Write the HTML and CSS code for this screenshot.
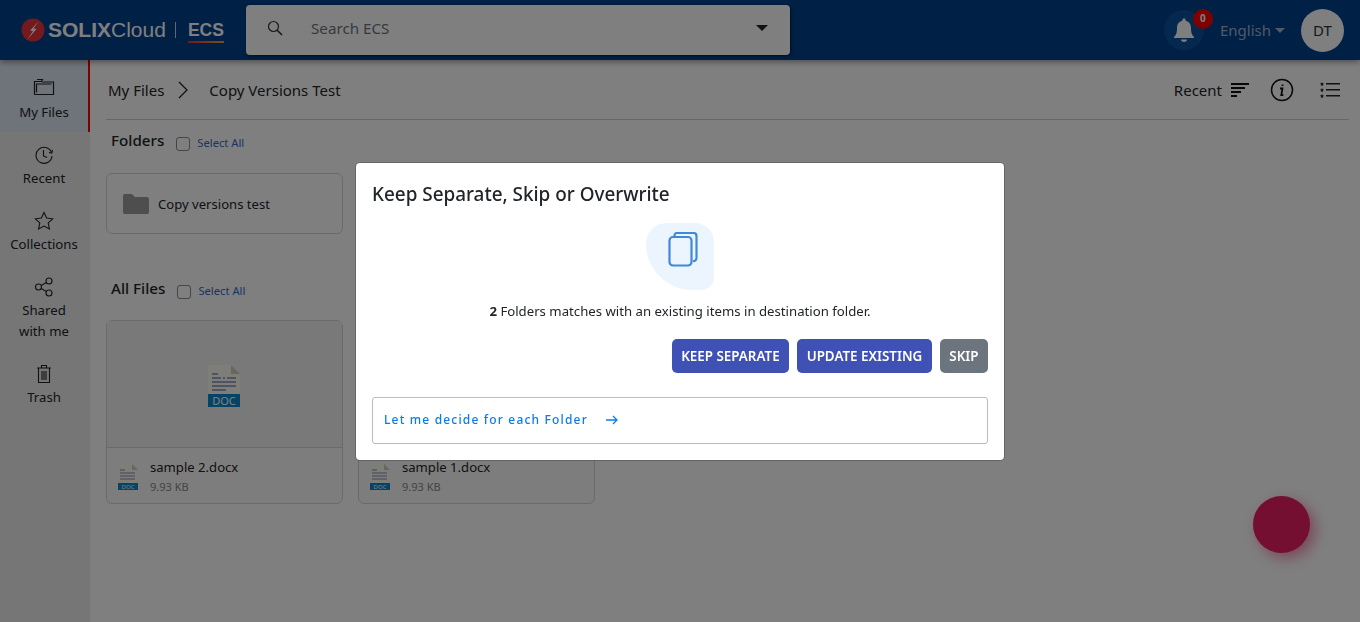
FILE: index.html
```html
<!DOCTYPE html>
<html>
<head>
    <title>SOLIXCloud ECS</title>
    <link rel="stylesheet" href="styles.css">
</head>
<body>
    <header class="topbar">
        <div class="logo">
            <svg class="logo-mark" width="24" height="24" viewBox="0 0 24 24">
                <circle cx="12" cy="12" r="11.5" fill="#e8323a"/>
                <path d="M18 3 L9 12.500 L12 13 L6 22 L15.500 11 L12.500 10.500 Z" fill="#fff"/>
            </svg>
            <span class="logo-solix">SOLIX</span><span class="logo-cloud">Cloud</span>
            <span class="logo-sep"></span>
            <span class="logo-ecs">ECS</span>
        </div>
        <div class="search">
            <svg width="16" height="16" viewBox="0 0 16 16" fill="none" stroke="#333" stroke-width="1.2">
                <circle cx="6.5" cy="6.5" r="5"/>
                <path d="M10.2 10.2 L15 15" stroke-width="1.6"/>
            </svg>
            <span class="search-text">Search ECS</span>
            <span class="search-caret"></span>
        </div>
        <div class="topbar-right">
            <div class="bell">
                <svg width="24" height="26" viewBox="0 0 24 26" fill="#fff">
                    <path d="M12 1.500c-1 0-1.700.7-1.700 1.700v.6C6.800 4.600 5 7.500 5 11c0 5-1 7-3 9v1h20v-1c-2-2-3-4-3-9 0-3.500-1.800-6.400-5.300-7.200v-.6c0-1-.7-1.700-1.700-1.700z"/>
                    <path d="M9 22.500h6c0 1.500-1.300 2.500-3 2.500s-3-1-3-2.500z"/>
                </svg>
                <span class="bell-count">0</span>
            </div>
            <span class="lang">English<span class="lang-caret"></span></span>
            <span class="avatar">DT</span>
        </div>
    </header>

    <div class="main">
        <nav class="sidebar">
            <a class="nav-item active">
                <svg width="22" height="18" viewBox="0 0 22 18" fill="none" stroke="#222" stroke-width="1.2">
                    <path d="M1.500 16.500V3.500h7l1-2H4"/>
                    <path d="M1.500 16.500H20.500V4H9"/>
                    <path d="M3.500 14.500V6H18.500"/>
                </svg>
                <span>My Files</span>
            </a>
            <a class="nav-item">
                <svg width="20" height="20" viewBox="0 0 20 20" fill="none" stroke="#222" stroke-width="1.1">
                    <path d="M17.500 7.500A8 8 0 1 0 18 11"/>
                    <path d="M15 7.500l2.700.5.800-3"/>
                    <path d="M9.500 5v6l3.500 1.500"/>
                </svg>
                <span>Recent</span>
            </a>
            <a class="nav-item">
                <svg width="20" height="20" viewBox="0 0 20 20" fill="none" stroke="#222" stroke-width="1.1">
                    <path d="M10 1.500l2.600 5.600 6 .7-4.400 4.100 1.200 6L10 15l-5.400 2.900 1.200-6L1.400 7.800l6-.7z"/>
                </svg>
                <span>Collections</span>
            </a>
            <a class="nav-item">
                <svg width="20" height="20" viewBox="0 0 20 20" fill="none" stroke="#222" stroke-width="1.1">
                    <circle cx="15" cy="4" r="3"/>
                    <circle cx="4.500" cy="10" r="3"/>
                    <circle cx="15" cy="16" r="3"/>
                    <path d="M12.300 5.500L7.200 8.500M7.200 11.500l5.100 3"/>
                </svg>
                <span>Shared<br>with me</span>
            </a>
            <a class="nav-item">
                <svg width="18" height="20" viewBox="0 0 18 20" fill="none" stroke="#222" stroke-width="1.1">
                    <path d="M2 4h14M6.500 4V1.500h5V4M3.500 4v14.500h11V4"/>
                    <path d="M7 7v9M9 7v9M11 7v9"/>
                </svg>
                <span>Trash</span>
            </a>
        </nav>

        <div class="content">
            <div class="crumbs">
                <span>My Files</span>
                <svg class="chevron" width="12" height="18" viewBox="0 0 12 18" fill="none" stroke="#222" stroke-width="1.300">
                    <path d="M2 1l8 8-8 8"/>
                </svg>
                <span>Copy Versions Test</span>
                <div class="crumb-tools">
                    <span>Recent</span>
                    <svg class="sort-icon" width="18" height="14" viewBox="0 0 18 14" fill="#111">
                        <rect x="0" y="0" width="18" height="2"/>
                        <rect x="0" y="4" width="14" height="2"/>
                        <rect x="0" y="8" width="10" height="2"/>
                        <rect x="0" y="12" width="6" height="2"/>
                    </svg>
                    <svg class="info-icon" width="24" height="24" viewBox="0 0 24 24" fill="none" stroke="#111" stroke-width="1.500">
                        <circle cx="12" cy="12" r="10.500"/>
                        <path d="M10 10.500h2.500l-1.200 6.500h2M12.500 6.500v1.500" stroke-width="1.800"/>
                    </svg>
                    <svg class="list-icon" width="20" height="16" viewBox="0 0 20 16" fill="#222">
                        <rect x="6" y="1" width="14" height="1.500"/>
                        <rect x="6" y="7" width="14" height="1.500"/>
                        <rect x="6" y="13" width="14" height="1.500"/>
                        <path d="M2 0l.6 1.300L4 1.500 3 2.500l.2 1.400L2 3.200.8 3.900 1 2.500 0 1.500l1.400-.2z"/>
                        <path d="M2 6l.6 1.300L4 7.500 3 8.500l.2 1.400L2 9.200l-1.200.7L1 8.500 0 7.500l1.400-.2z"/>
                        <path d="M2 12l.6 1.300 1.400.2-1 1 .2 1.400-1.200-.7-1.200.7.200-1.400-1-1 1.400-.2z"/>
                    </svg>
                </div>
            </div>

            <div class="section-head">
                <h3>Folders</h3>
                <span class="check"></span>
                <a class="select-all">Select All</a>
            </div>
            <div class="folder-card">
                <svg width="26" height="20" viewBox="0 0 26 20" fill="#9c9c9c">
                    <path d="M0 2a2 2 0 0 1 2-2h7l3 3h12a2 2 0 0 1 2 2v13a2 2 0 0 1-2 2H2a2 2 0 0 1-2-2z"/>
                </svg>
                <span>Copy versions test</span>
            </div>

            <div class="section-head files-head">
                <h3>All Files</h3>
                <span class="check"></span>
                <a class="select-all">Select All</a>
            </div>
            <div class="file-grid">
                <div class="file-card">
                    <div class="file-thumb">
                        <svg width="32" height="42" viewBox="0 0 32 42">
                            <path d="M0 0h23l9 9v24H0z" fill="#fdfdf0"/>
                            <path d="M23 0l9 9h-9z" fill="#cfcfbe"/>
                            <path d="M4 9h6M4 13h9M15 13h2M19 13h9M4 17h24M4 21h24M4 25h14" stroke="#7f86b8" stroke-width="1.500"/>
                            <rect y="29" width="32" height="13" fill="#0a88cc"/>
                            <text x="16" y="40" class="doc-label">DOC</text>
                        </svg>
                    </div>
                    <div class="file-info">
                        <svg class="doc-icon" width="20" height="26" viewBox="0 0 20 26">
                            <path d="M0 0h14l6 6v14H0z" fill="#fdfdf0"/>
                            <path d="M14 0l6 6h-6z" fill="#cfcfbe"/>
                            <path d="M2 6h5M2 9h15M2 12h15M2 15h15" stroke="#7f86b8" stroke-width="1.200"/>
                            <rect y="19" width="20" height="7" fill="#0a88cc"/>
                            <text x="10" y="25" class="doc-label small">DOC</text>
                        </svg>
                        <div>
                            <div class="file-name">sample 2.docx</div>
                            <div class="file-size">9.93 KB</div>
                        </div>
                    </div>
                </div>
                <div class="file-card">
                    <div class="file-thumb"></div>
                    <div class="file-info">
                        <svg class="doc-icon" width="20" height="26" viewBox="0 0 20 26">
                            <path d="M0 0h14l6 6v14H0z" fill="#fdfdf0"/>
                            <path d="M14 0l6 6h-6z" fill="#cfcfbe"/>
                            <path d="M2 6h5M2 9h15M2 12h15M2 15h15" stroke="#7f86b8" stroke-width="1.200"/>
                            <rect y="19" width="20" height="7" fill="#0a88cc"/>
                            <text x="10" y="25" class="doc-label small">DOC</text>
                        </svg>
                        <div>
                            <div class="file-name">sample 1.docx</div>
                            <div class="file-size">9.93 KB</div>
                        </div>
                    </div>
                </div>
            </div>
        </div>
    </div>

    <div class="fab"></div>

    <div class="backdrop">
        <div class="modal">
            <h2>Keep Separate, Skip or Overwrite</h2>
            <div class="modal-icon">
                <svg width="30" height="35" viewBox="0 0 30 35" fill="none" stroke="#3f8ad8" stroke-width="2.200">
                    <path d="M6.500 4V3.500A2.500 2.500 0 0 1 9 1H25.500a3 3 0 0 1 3 3v22a3 3 0 0 1-3.500 3"/>
                    <rect x="1.500" y="5" width="22" height="28.500" rx="3.500"/>
                </svg>
            </div>
            <p class="modal-msg"><b>2</b> Folders matches with an existing items in destination folder.</p>
            <div class="modal-actions">
                <button class="btn btn-primary">KEEP SEPARATE</button>
                <button class="btn btn-primary">UPDATE EXISTING</button>
                <button class="btn btn-grey">SKIP</button>
            </div>
            <div class="decide">
                <span>Let me decide for each Folder</span>
                <svg width="12" height="10" viewBox="0 0 12 10" fill="none" stroke="#0a7cf0" stroke-width="1.300">
                    <path d="M0 5h11M7 1l4 4-4 4"/>
                </svg>
            </div>
        </div>
    </div>
</body>
</html>
```

FILE: styles.css
```css
* {
    box-sizing: border-box;
}
body {
    margin: 0;
    height: 622px;
    overflow: hidden;
    background-color: #fff;
    color: #212529;
    font-family: "Noto Sans", "Open Sans", Arial, sans-serif;
    font-size: 14px;
}

/* top bar */
.topbar {
    height: 60px;
    background-color: #00408c;
    box-shadow: 0 2px 6px rgba(0, 0, 0, 0.4);
    display: flex;
    align-items: center;
    padding-left: 21px;
    position: relative;
}
.logo {
    width: 225px;
    display: flex;
    align-items: center;
    color: #fff;
    flex-shrink: 0;
}
.logo-mark {
    margin-right: 3px;
}
.logo-solix {
    font-family: "Liberation Sans", Arial, sans-serif;
    font-weight: 700;
    font-size: 21px;
}
.logo-cloud {
    font-family: "Liberation Sans", Arial, sans-serif;
    font-size: 21px;
}
.logo-sep {
    width: 1px;
    height: 16px;
    background-color: #ccc;
    margin: 0 12px 0 9px;
}
.logo-ecs {
    font-family: "Liberation Sans", Arial, sans-serif;
    font-weight: 700;
    font-size: 17.500px;
    line-height: 22px;
    padding-bottom: 2px;
    margin-top: 2px;
    background: linear-gradient(90deg, #e8323a, #f0a030) no-repeat bottom / 100% 2px;
}
.search {
    width: 544px;
    height: 50px;
    background-color: #fff;
    border-radius: 4px;
    box-shadow: 1px 1px 3px rgba(0, 0, 0, 0.6);
    display: flex;
    align-items: center;
    padding: 0 22px 4px 21px;
}
.search-text {
    margin-left: 28px;
    font-size: 15.200px;
    color: #6c757d;
    flex: 1;
}
.search-caret {
    border-left: 6px solid transparent;
    border-right: 6px solid transparent;
    border-top: 6px solid #222;
}
.topbar-right {
    margin-left: auto;
    display: flex;
    align-items: center;
    padding-right: 16px;
}
.bell {
    width: 40px;
    height: 40px;
    border-radius: 50%;
    background-color: #0a509f;
    display: flex;
    align-items: center;
    justify-content: center;
    position: relative;
}
.bell-count {
    position: absolute;
    top: -1px;
    right: -9px;
    width: 20px;
    height: 20px;
    border-radius: 50%;
    background-color: #ff0000;
    color: #fff;
    font-size: 10px;
    font-weight: 700;
    line-height: 18px;
    text-align: center;
}
.lang {
    margin-left: 16px;
    color: #9db3d0;
    font-size: 15px;
    display: flex;
    align-items: center;
}
.lang-caret {
    margin-left: 4px;
    border-left: 5px solid transparent;
    border-right: 5px solid transparent;
    border-top: 5px solid #9db3d0;
}
.avatar {
    margin-left: 16px;
    width: 43px;
    height: 43px;
    border-radius: 50%;
    background-color: #fff;
    color: #333;
    font-size: 15px;
    display: flex;
    align-items: center;
    justify-content: center;
}

/* sidebar */
.main {
    display: flex;
    height: 562px;
}
.sidebar {
    width: 90px;
    flex-shrink: 0;
    background-color: #ececec;
}
.nav-item {
    display: flex;
    flex-direction: column;
    align-items: center;
    text-align: center;
    color: #212529;
    font-size: 13.200px;
    line-height: 21px;
    padding: 13px 2px 9px 0;
    gap: 3px;
}
.nav-item.active {
    background-color: #dfe7f5;
    border-right: 2px solid #ff0000;
    height: 72px;
    padding: 18px 0 0 0;
    gap: 6px;
}

/* main content */
.content {
    flex: 1;
    padding: 0 11px 0 16px;
}
.crumbs {
    height: 60px;
    display: flex;
    align-items: center;
    gap: 13px;
    border-bottom: 1px solid #ccc;
    padding-left: 2px;
    font-size: 15px;
}
.chevron {
    margin-right: 7px;
}
.crumb-tools {
    margin-left: auto;
    display: flex;
    align-items: center;
    font-size: 15px;
    padding-right: 9px;
}
.sort-icon {
    margin-left: 9px;
    margin-right: 21px;
}
.info-icon {
    margin-right: 26px;
}
.section-head {
    display: flex;
    align-items: center;
    margin-top: 9px;
    padding-left: 5px;
    height: 22px;
}
.section-head h3 {
    margin: 0 12px 0 0;
    font-size: 15.200px;
    font-weight: 500;
}
.check {
    width: 14px;
    height: 14px;
    border: 1px solid #8a8a8a;
    border-radius: 3px;
    background-color: #fff;
    margin-top: 8px;
}
.select-all {
    margin-left: 7px;
    color: #3567c8;
    font-size: 11.200px;
    margin-top: 4px;
}
.folder-card {
    margin-top: 22px;
    width: 237px;
    height: 61px;
    border: 1px solid #d5d5d5;
    border-radius: 6px;
    display: flex;
    align-items: center;
    padding-left: 16px;
    gap: 9px;
    font-size: 13.100px;
}
.files-head {
    margin-top: 43px;
}
.file-grid {
    display: flex;
    gap: 15.500px;
    margin-top: 21px;
}
.file-card {
    width: 236.500px;
    height: 184px;
    border: 1px solid #d5d5d5;
    border-radius: 6px;
    background-color: #fafafa;
    display: flex;
    flex-direction: column;
}
.file-thumb {
    height: 127px;
    border-bottom: 1px solid #d5d5d5;
    display: flex;
    align-items: center;
    justify-content: center;
    padding-top: 3px;
    background-color: #f2f2f2;
}
.doc-label {
    font-family: "Noto Sans", sans-serif;
    font-size: 11px;
    fill: #fff;
    text-anchor: middle;
}
.doc-label.small {
    font-size: 6px;
}
.file-info {
    flex: 1;
    display: flex;
    padding: 9px 0 0 11px;
    gap: 12px;
}
.doc-icon {
    margin-top: 7px;
}
.file-name {
    font-size: 13.100px;
    line-height: 20px;
}
.file-size {
    font-size: 11px;
    line-height: 19px;
    color: #888;
}

/* dialog */
.backdrop {
    position: fixed;
    inset: 0;
    background-color: rgba(0, 0, 0, 0.5);
    display: flex;
    justify-content: center;
    padding-top: 163px;
}
.modal {
    width: 648px;
    height: 297px;
    background-color: #fff;
    border-radius: 4px;
    box-shadow: 0 0 0 1px rgba(0, 0, 0, 0.2);
    padding: 16px;
    display: flex;
    flex-direction: column;
}
.modal h2 {
    margin: 0;
    font-size: 18.900px;
    line-height: 30px;
    font-weight: 500;
}
.modal-icon {
    width: 68px;
    height: 68px;
    margin: 14px auto 0;
    padding: 9px 0 0 5px;
    background-color: #ecf5fe;
    display: flex;
    align-items: flex-start;
    justify-content: center;
    border-radius: 22px 20px 14px 50px;
}
.modal-msg {
    margin: 12px 0 0;
    text-align: center;
    font-size: 13.200px;
    line-height: 18px;
}
.modal-actions {
    display: flex;
    justify-content: flex-end;
    gap: 8px;
    margin-top: 19px;
}
.btn {
    height: 34px;
    border: none;
    border-radius: 5px;
    color: #fff;
    font-family: inherit;
    font-size: 13.400px;
    font-weight: 600;
    padding: 0 9.500px;
}
.btn-primary {
    background-color: #3f51b5;
}
.btn-grey {
    background-color: #6c757d;
}
.decide {
    margin-top: 24px;
    height: 47px;
    border: 1px solid #bbb;
    border-radius: 3px;
    display: flex;
    align-items: center;
    padding: 0 0 2px 11px;
    color: #0a7cf0;
    font-size: 12px;
    font-weight: 500;
    letter-spacing: 1.180px;
    gap: 18px;
}

.fab {
    position: fixed;
    left: 1253px;
    top: 496px;
    width: 57px;
    height: 57px;
    border-radius: 50%;
    background-color: #e91e63;
    box-shadow: 5px 5px 14px rgba(233, 30, 99, 0.5);
}
```
